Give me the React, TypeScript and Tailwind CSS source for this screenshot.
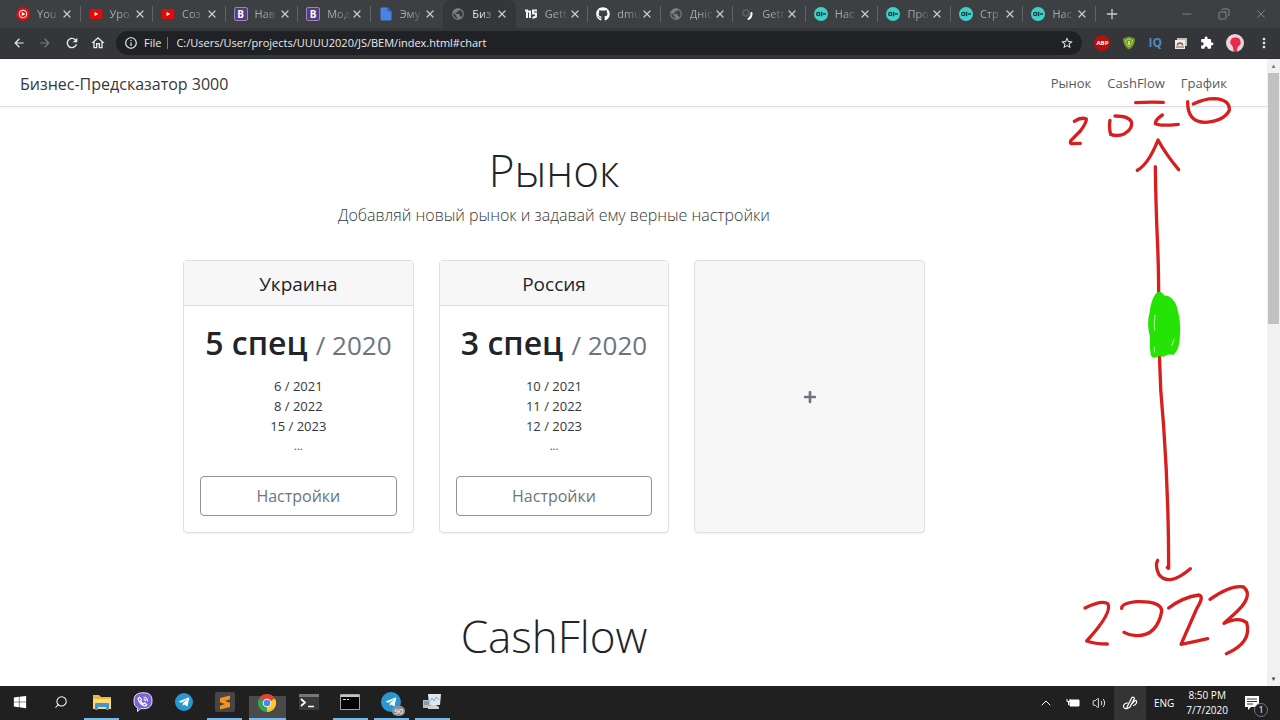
import { ReactNode } from "react";
import { FaGithub, FaTelegramPlane, FaWindows, FaPlus } from "react-icons/fa";
import {
  MdArrowBack,
  MdArrowForward,
  MdRefresh,
  MdInfoOutline,
  MdOutlineHome,
  MdStarBorder,
  MdExtension,
  MdMoreVert,
  MdPublic,
} from "react-icons/md";
import { X, Plus, Minus, Copy, Search, ChevronUp, Volume2 } from "lucide-react";

type TabType = { title: string; icon: string; active?: boolean };
type MarketType = { name: string; amount: string; year: string; plan: string[] };

const tabs: TabType[] = [
  { title: "You", icon: "music" },
  { title: "Уро", icon: "youtube" },
  { title: "Соз", icon: "youtube" },
  { title: "Нав", icon: "bootstrap" },
  { title: "Мод", icon: "bootstrap" },
  { title: "Эму", icon: "doc" },
  { title: "Биз", icon: "globe", active: true },
  { title: "Gett", icon: "book" },
  { title: "dmu", icon: "github" },
  { title: "Дніс", icon: "globe" },
  { title: "Gett", icon: "loading" },
  { title: "Нас", icon: "oi" },
  { title: "Про", icon: "oi" },
  { title: "Стр", icon: "oi" },
  { title: "Нас", icon: "oi" },
];

const markets: MarketType[] = [
  { name: "Украина", amount: "5 спец", year: "2020", plan: ["6 / 2021", "8 / 2022", "15 / 2023"] },
  { name: "Россия", amount: "3 спец", year: "2020", plan: ["10 / 2021", "11 / 2022", "12 / 2023"] },
];

function Favicon({ icon }: { icon: string }) {
  if (icon == "music") {
    return (
      <svg viewBox="0 0 14 14" className="size-3.5 shrink-0">
        <circle cx="7" cy="7" r="6.7" fill="#e60d0d" />
        <circle cx="7" cy="7" r="3.8" fill="none" stroke="#fff" />
        <path d="M5.8 4.9 9.4 7 5.8 9.1z" fill="#fff" />
      </svg>
    );
  }
  if (icon == "youtube") {
    return (
      <svg viewBox="0 0 14 14" className="size-3.5 shrink-0">
        <rect x="0.5" y="2" width="13" height="10" rx="2.6" fill="#e10b0b" />
        <path d="M5.6 4.9 9.3 7 5.6 9.1z" fill="#fff" />
      </svg>
    );
  }
  if (icon == "bootstrap") {
    return (
      <span className="flex size-3.5 shrink-0 items-center justify-center rounded-xs border border-[#9c83bd] bg-[#563d7c] text-[10px] leading-3 font-bold text-white">
        B
      </span>
    );
  }
  if (icon == "doc") {
    return (
      <svg viewBox="0 0 14 14" className="size-3.5 shrink-0">
        <path d="M1.5 1.5q0-1 1-1h6l4 4v8q0 1-1 1h-9q-1 0-1-1z" fill="#4a82e6" />
        <path d="M8.500.5v4h4z" fill="#2f62bd" />
      </svg>
    );
  }
  if (icon == "globe") {
    return <MdPublic className="size-3.5 shrink-0 text-[#7b7e82]" />;
  }
  if (icon == "book") {
    return (
      <svg viewBox="0 0 14 14" className="size-3.5 shrink-0" fill="none" stroke="#f1f1f1" strokeWidth="2">
        <path d="M1 3.500h2V11M3 4.500h3V11M13 3.500H9V6.500h3V9.500L8.500 11" />
      </svg>
    );
  }
  if (icon == "github") {
    return <FaGithub className="size-3.5 shrink-0 text-white" />;
  }
  if (icon == "loading") {
    return (
      <svg viewBox="0 0 14 14" className="size-3.5 shrink-0" fill="none" strokeLinecap="round">
        <circle cx="5" cy="6" r="3" stroke="#56595d" strokeWidth="2" />
        <path d="M10.500 6q.3 4-3 6" stroke="#fff" strokeWidth="2" />
      </svg>
    );
  }
  return (
    <svg viewBox="0 0 14 14" className="size-3.5 shrink-0">
      <circle cx="7" cy="7" r="7" fill="#3fd0c9" />
      <circle cx="4.200" cy="7" r="1.600" fill="none" stroke="#123f40" strokeWidth="1.300" />
      <path d="M7.600 4.700v4.600M9 7h3" stroke="#123f40" strokeWidth="1.500" />
    </svg>
  );
}

function BrowserTab({ tab }: { tab: TabType }) {
  return (
    <div
      className={`flex min-w-0 flex-1 items-center ${
        tab.active ? "rounded-t-lg bg-[#35363a]" : ""
      }`}
    >
      <div className="flex min-w-0 flex-1 items-center pl-2">
        <Favicon icon={tab.icon} />
        <span
          className={`ml-[7px] w-6 whitespace-nowrap mask-r-from-40% text-[11px] ${
            tab.active ? "text-[#e3e4e6]" : "text-[#a5a8ac]"
          }`}
        >
          {tab.title}
        </span>
        <button type="button" aria-label="Закрыть" className="text-[#c8cacd]">
          <X className="size-3" strokeWidth={2.5} />
        </button>
      </div>
      <div className={`h-4 w-px ${tab.active || tab.icon == "doc" ? "" : "bg-[#606367]"}`} />
    </div>
  );
}

function BrowserBar() {
  return (
    <header className="shrink-0">
      <div className="flex h-7 bg-[#3c4043] pl-2">
        <div className="flex min-w-0 flex-1">
          {tabs.map((tab, i) => (
            <BrowserTab key={i} tab={tab} />
          ))}
        </div>
        <div className="flex w-46 items-center text-[#85888b]">
          <button type="button" aria-label="Новая вкладка" className="ml-2 text-[#c8cacd]">
            <Plus className="size-4" />
          </button>
          <button type="button" aria-label="Свернуть" className="ml-auto">
            <Minus className="size-3.5" strokeWidth={1.5} />
          </button>
          <button type="button" aria-label="Развернуть" className="ml-6">
            <Copy className="size-3 -scale-x-100" strokeWidth={2} />
          </button>
          <button type="button" aria-label="Закрыть окно" className="mr-3 ml-6">
            <X className="size-3.5" strokeWidth={1.5} />
          </button>
        </div>
      </div>
      <div className="flex h-[31px] items-center border-b border-[#2c2d30] bg-[#35363a] pl-3 text-[#e8eaed]">
        <button type="button" aria-label="Назад">
          <MdArrowBack className="size-3.5" />
        </button>
        <button type="button" aria-label="Вперёд" className="ml-3 text-[#77797d]">
          <MdArrowForward className="size-3.5" />
        </button>
        <button type="button" aria-label="Обновить" className="ml-3">
          <MdRefresh className="size-4" />
        </button>
        <button type="button" aria-label="Домой" className="ml-2.5">
          <MdOutlineHome className="size-4" />
        </button>
        <div className="ml-2.5 flex h-6 min-w-0 flex-1 items-center rounded-full bg-[#202124] pr-2 pl-2">
          <MdInfoOutline className="size-3.5 shrink-0" />
          <label htmlFor="url" className="ml-1.5 border-r border-[#777a7e] pr-1.5 text-[11px] leading-3">
            File
          </label>
          <input
            id="url"
            type="text"
            className="ml-2 min-w-0 flex-1 bg-transparent text-[11px] outline-none"
            defaultValue="C:/Users/User/projects/UUUU2020/JS/BEM/index.html#chart"
          />
          <button type="button" aria-label="Добавить в закладки">
            <MdStarBorder className="size-3.5" />
          </button>
        </div>
        <div className="flex items-center gap-3 pr-2 pl-3">
          <button
            type="button"
            className="flex size-4 items-center justify-center rounded-full bg-[#b3110f] text-[6px] font-bold text-white"
          >
            ABP
          </button>
          <button type="button" aria-label="Защита">
            <svg viewBox="0 0 14 14" className="size-3.5">
              <path d="M7 .5 13 2.500q0 8-6 11-6-3-6-11z" fill="#6d9624" />
              <path d="M7 3 10.500 4.500q0 4-3.500 6.500-3.500-2.500-3.500-6.500z" fill="none" stroke="#b5d75d" />
              <path d="M7 5v4" stroke="#e4f0bd" strokeWidth="1.500" />
            </svg>
          </button>
          <button type="button" className="text-[12px] font-bold text-[#5289bd]">
            IQ
          </button>
          <button type="button" aria-label="Скриншоты">
            <svg viewBox="0 0 14 14" className="size-3.5">
              <path d="M3 2h10v8H3z" fill="#b9c7b4" />
              <path d="M1 4h10v9H1z" fill="#eee" />
              <path d="M3.500 9.500a2.500 2.500 0 0 1 5 0" fill="none" stroke="#c0413b" strokeWidth="1.500" />
              <path d="M2 11h8" stroke="#4a7a4a" />
            </svg>
          </button>
          <button type="button" aria-label="Расширения" className="text-white">
            <MdExtension className="size-3.5" />
          </button>
          <button type="button" aria-label="Профиль">
            <svg viewBox="0 0 18 18" className="size-[18px]">
              <circle cx="9" cy="9" r="9" fill="#ecd5d8" />
              <path d="M9 3.500a4.500 4.500 0 0 0-3 8q1.500 1.500 1.500 6.500h3.700q-.5-3 .8-5.500A4.800 4.800 0 0 0 9 3.500z" fill="#e8294c" />
            </svg>
          </button>
          <button type="button" aria-label="Меню">
            <MdMoreVert className="size-4" />
          </button>
        </div>
      </div>
    </header>
  );
}

function MarketCard({ market }: { market: MarketType }) {
  return (
    <div className="flex flex-1 flex-col rounded border border-[#dfdfdf] text-center shadow-xs">
      <h4 className="border-b border-[#dfdfdf] bg-[#f7f7f7] pt-[11px] pb-[9px] text-[19px] leading-6">{market.name}</h4>
      <div className="flex flex-1 flex-col p-4">
        <h1 className="mt-0.5 text-[32px] leading-[38px] font-semibold whitespace-nowrap">
          {market.amount} <small className="text-[26px] font-normal text-[#6c757d]">/ {market.year}</small>
        </h1>
        <ul className="mt-3 text-[13px] leading-5 text-[#34383c]">
          {market.plan.map((row) => (
            <li key={row}>{row}</li>
          ))}
          <li className="text-[11px]">...</li>
        </ul>
        <button
          type="button"
          className="mt-auto h-10 w-full rounded border border-[#8d9499] text-[16px] text-[#6c757d]"
        >
          Настройки
        </button>
      </div>
    </div>
  );
}

// hand-drawn timeline over the page
function Drawing() {
  return (
    <svg
      viewBox="0 0 750 1881"
      className="pointer-events-none absolute top-px right-0 h-[627px] w-[250px]"
      fill="none"
      stroke="#d6201f"
      strokeWidth="10"
      strokeLinecap="round"
      strokeLinejoin="round"
    >
      <path d="M133 184Q153 170 169 177Q170 188 151 213L123 241Q119 249 124 251L151 250" />
      <path d="M240 181Q236 200 242 223Q262 231 284 221Q307 207 305 187Q298 168 255 168" />
      <path d="M317 128Q358 125 400 127M397 165Q375 180 376 191Q388 199 445 193" />
      <path d="M473 125Q472 187 526 187Q582 184 598 151Q600 118 552 116Q523 116 490 132" />
      <path d="M322 331Q355 313 384 240Q407 282 446 329" />
      <path d="M376 320Q377 425 383 560Q386 630 386 720M388 880Q390 990 401 1100Q416 1310 416 1525L412 1522" />
      <path d="M383 1501Q374 1516 387 1544Q417 1581 481 1526" />
      <path d="M165 1644Q218 1618 234 1632Q247 1659 170 1743Q193 1752 232 1752" />
      <path d="M275 1645Q274 1630 320 1625Q397 1623 395 1655Q380 1730 317 1727Q298 1726 282 1717" />
      <path d="M416 1644Q460 1611 507 1605Q523 1609 501 1644L453 1753Q495 1745 533 1736" />
      <path d="M540 1618Q603 1574 641 1581Q673 1609 613 1662L582 1690Q626 1669 650 1688Q667 1747 589 1781" />
      <path
        d="M378 704Q390 690 401 708Q425 707 438 740Q452 790 447 830Q447 865 430 882Q417 880 409 883Q397 892 385 885Q372 896 365 886Q360 860 362 830Q352 790 361 758Q365 723 378 704z"
        fill="#25e304"
        stroke="#25e304"
        strokeWidth="5"
      />
      <path d="M375 766Q371 790 374 810M373 862V876M432 838L426 856" stroke="#baf7ae" strokeWidth="3" />
    </svg>
  );
}

function Page() {
  return (
    <main className="relative flex min-h-0 flex-1 bg-white text-[#212529]">
      <div className="min-w-0 flex-1 overflow-hidden">
        <nav className="flex h-12 items-center border-b border-[#dcdfe2] pt-0.5 pr-10 pl-5 shadow-xs">
          <h5 className="text-[16px] text-[#34383c]">Бизнес-Предсказатор 3000</h5>
          <div className="ml-auto flex gap-4 text-[13px] text-[#555a5f]">
            <a href="#market">Рынок</a>
            <a href="#cashflow">CashFlow</a>
            <a href="#chart">График</a>
          </div>
        </nav>
        <div className="pr-[342px] pl-[183px]">
          <section id="market" className="pt-9">
            <h1 className="text-center text-[44px] leading-[54px] font-light">Рынок</h1>
            <p className="mt-1.5 text-center text-[16px] leading-6 font-light text-[#34383c]">
              Добавляй новый рынок и задавай ему верные настройки
            </p>
            <div className="mt-[33px] flex h-[273px] gap-[25px]">
              {markets.map((market) => (
                <MarketCard key={market.name} market={market} />
              ))}
              <button
                type="button"
                aria-label="Добавить рынок"
                className="flex flex-1 items-center justify-center rounded border border-[#dfdfdf] bg-[#f7f7f7] text-[#6c757d] shadow-xs"
              >
                <FaPlus className="size-3.5" />
              </button>
            </div>
          </section>
          <section id="cashflow" className="pt-[76px]">
            <h1 className="text-center text-[44px] leading-[54px] font-light">CashFlow</h1>
          </section>
        </div>
      </div>
      <div className="flex w-[13px] shrink-0 flex-col items-center bg-[#f1f1f1]">
        <div className="flex h-3.5 items-center text-[6px] text-[#777]">▲</div>
        <div className="h-[251px] w-[11px] bg-[#c1c1c1]" />
        <div className="mt-auto flex h-3.5 items-center text-[6px] text-[#444]">▼</div>
      </div>
      <Drawing />
    </main>
  );
}

function TaskButton({
  label,
  open,
  active,
  children,
}: {
  label: string;
  open?: boolean;
  active?: boolean;
  children: ReactNode;
}) {
  return (
    <button
      type="button"
      aria-label={label}
      className={`flex items-center justify-center border-b-2 ${open ? "border-[#76b9ed]" : "border-transparent"} ${
        active ? "mt-2.5 w-[37px] bg-[#4a4a4a] pb-2" : "w-[35px]"
      }`}
    >
      {children}
    </button>
  );
}

function Taskbar() {
  return (
    <footer className="flex h-[34px] shrink-0 bg-[#202020] text-white">
      <div className="ml-0.5 flex w-[448px] justify-between">
        <TaskButton label="Пуск">
          <FaWindows className="size-3.5" />
        </TaskButton>
        <TaskButton label="Поиск">
          <Search className="size-3.5 -scale-x-100" strokeWidth={1.8} />
        </TaskButton>
        <TaskButton label="Проводник" open>
          <svg viewBox="0 0 20 18" className="h-[18px] w-5">
            <path d="M1 2h6l2 2h10v12H1z" fill="#e9b63f" />
            <path d="M1 6h18v10H1z" fill="#fbd976" />
            <path d="M3 17V11q0-1 1-1h12q1 0 1 1v6h-3v-3H6v3z" fill="#4394cb" />
          </svg>
        </TaskButton>
        <TaskButton label="Viber">
          <svg viewBox="0 0 20 20" className="size-5">
            <path
              d="M10 .8C3.500.8 1 3.500 1 9c0 3.500 1 5.500 3.500 6.700V19.500l3.300-2.900C15.500 17.200 19 15 19 9S16.500.8 10 .8z"
              fill="#7c63d6"
              stroke="#e7e2fa"
            />
            <path
              d="M6.500 5.200q-2 1-1 3 1.700 4 5.500 5.500 2 .6 2.700-1l-2-1.800-1.500.8q-2-1-2.600-3l1-1zM10.500 5q4 .4 4 4.300M10.700 7.200q1.800.3 1.800 2"
              fill="none"
              stroke="#fff"
              strokeWidth="1.200"
            />
          </svg>
        </TaskButton>
        <TaskButton label="Telegram">
          <span className="flex size-[18px] items-center justify-center rounded-full bg-[#2b97cf]">
            <FaTelegramPlane className="size-3" />
          </span>
        </TaskButton>
        <TaskButton label="Sublime Text" open>
          <svg viewBox="0 0 20 20" className="size-5">
            <rect width="20" height="20" rx="2" fill="#464646" />
            <path d="M15 3.500v3.800l-5 1.700 5 1.800V15L5 17.500v-3.800l5-1.700-5-1.800V6z" fill="#f4941c" />
          </svg>
        </TaskButton>
        <TaskButton label="Chrome" open active>
          <svg viewBox="0 0 20 20" className="size-[18px] shrink-0">
            <path d="M10 10 1.300 5A10 10 0 0 1 18.700 5z" fill="#df4532" />
            <path d="M10 10V20A10 10 0 0 1 1.300 5z" fill="#35a353" />
            <path d="M10 10 18.700 5A10 10 0 0 1 10 20z" fill="#fbc926" />
            <circle cx="10" cy="10" r="4.800" fill="#f5f5f5" />
            <circle cx="10" cy="10" r="3.700" fill="#4688ee" />
          </svg>
        </TaskButton>
        <TaskButton label="Терминал">
          <svg viewBox="0 0 20 16" className="h-4 w-5">
            <path d="M0 0h20v16H0z" fill="#393939" />
            <path d="M0 0h20v3H0z" fill="#777" />
            <path d="m2 5 4 3.500L2 12M9 12.500h6" fill="none" stroke="#fff" strokeWidth="1.700" />
          </svg>
        </TaskButton>
        <TaskButton label="Командная строка" open>
          <svg viewBox="0 0 20 16" className="h-4 w-5">
            <path d="M.5.5h19v15H.5z" fill="#050505" stroke="#a6a6a6" />
            <path d="M1 2h18" stroke="#c6c6c6" strokeWidth="2" />
            <path d="M3 5.500h3M7 5.500h2" stroke="#ddd" />
          </svg>
        </TaskButton>
        <TaskButton label="Telegram" open>
          <span className="relative flex size-5 items-center justify-center rounded-full bg-[#2b97cf]">
            <FaTelegramPlane className="size-3" />
            <span className="absolute -right-1 -bottom-1 rounded-full bg-[#8b9297] px-0.5 text-[8px] leading-[10px]">
              90
            </span>
          </span>
        </TaskButton>
        <TaskButton label="Диспетчер" open>
          <svg viewBox="0 0 20 18" className="h-[18px] w-5">
            <path d="M6 1h13l-1 11H7z" fill="#dfe7eb" />
            <path d="m8 8 2-3 2 3 2-4 3 3" fill="none" stroke="#79abc5" />
            <path d="M1 7h7v8H1z" fill="#b8c0c5" />
            <path d="M9 12h5l3 2v2H6v-2z" fill="#cdd3d6" />
            <path d="M2 9h5M2 11h5" stroke="#66727a" />
          </svg>
        </TaskButton>
      </div>
      <div className="ml-auto flex items-center text-[10px]">
        <ChevronUp className="size-4" strokeWidth={1.5} />
        <svg viewBox="0 0 14 12" className="ml-3 h-3 w-3.5">
          <path d="M4 3h9v6H4z" fill="#fff" stroke="#fff" />
          <path d="M1 2v2.500h3V2M2.500 4.500V8" fill="none" stroke="#fff" />
        </svg>
        <Volume2 className="ml-3 size-3.5" strokeWidth={1.5} />
        <button
          type="button"
          aria-label="Windows Ink"
          className="ml-2 flex h-full w-8 items-center justify-center bg-[#343434]"
        >
          <svg
            viewBox="0 0 16 16"
            className="size-4"
            fill="none"
            stroke="#fff"
            strokeWidth="1.200"
            strokeLinecap="round"
          >
            <path d="M5 12 10 2.500q1.500-1 2.500.8L8 12 5 13.500zM5.500 8Q2 8 1.500 11q0 3 3.500 2.500M9 9.500l4-4q2-.5 1.500 2.500-1 2-3 2.500" />
          </svg>
        </button>
        <span className="ml-2">ENG</span>
        <div className="ml-3 text-center leading-[15px]">
          <div>8:50 PM</div>
          <div>7/7/2020</div>
        </div>
        <button type="button" aria-label="Уведомления" className="relative mr-5 ml-4 size-4">
          <svg viewBox="0 0 16 16" className="size-4">
            <path d="M1 1h14v11H7l-3 3v-3H1z" fill="#fff" />
            <path d="M3 4h10M3 6.500h10M3 9h6" stroke="#333" />
          </svg>
          <span className="absolute -right-2 -bottom-1.5 size-3.5 rounded-full border border-[#777] bg-[#202020] text-[9px] leading-3">
            1
          </span>
        </button>
      </div>
    </footer>
  );
}

export default function App() {
  return (
    <div className="flex h-screen flex-col overflow-hidden font-['Open_Sans','Noto_Sans',sans-serif]">
      <BrowserBar />
      <Page />
      <Taskbar />
    </div>
  );
}
